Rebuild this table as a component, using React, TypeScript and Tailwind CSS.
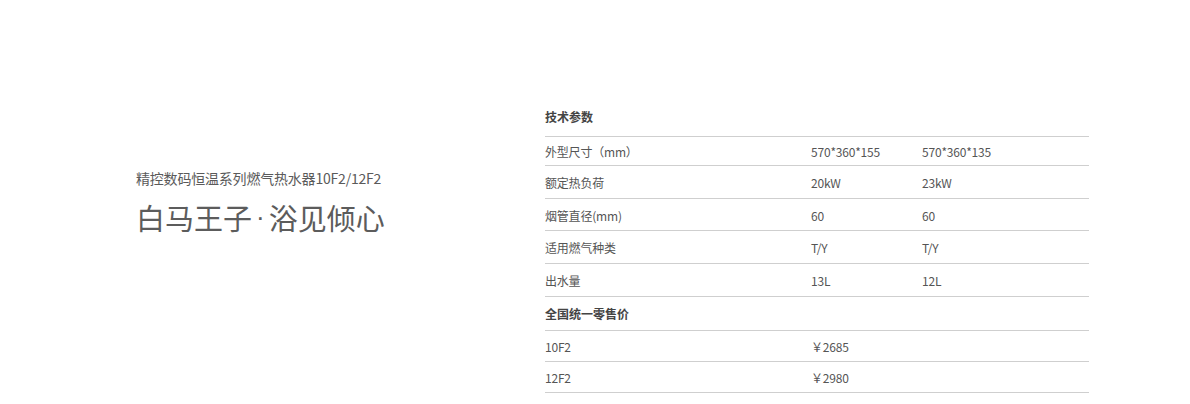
import React from 'react';

const font = { fontFamily: '"Noto Sans CJK SC", "Noto Sans", sans-serif' };

type Row = { cells: string[]; h: string; bold?: boolean };

const rows: Row[] = [
  { cells: ['技术参数'], h: 'h-[35px]', bold: true },
  { cells: ['外型尺寸（mm）', '570*360*155', '570*360*135'], h: 'h-[29px]' },
  { cells: ['额定热负荷', '20kW', '23kW'], h: 'h-[33px]' },
  { cells: ['烟管直径(mm)', '60', '60'], h: 'h-[32px]' },
  { cells: ['适用燃气种类', 'T/Y', 'T/Y'], h: 'h-[33px]' },
  { cells: ['出水量', '13L', '12L'], h: 'h-[33px]' },
  { cells: ['全国统一零售价'], h: 'h-[34px]', bold: true },
  { cells: ['10F2', '￥2685'], h: 'h-[31px]' },
  { cells: ['12F2', '￥2980'], h: 'h-[31px]' },
];

const colWidths = ['w-[266px]', 'w-[111px]', 'w-[167px]'];

export default function App() {
  return (
    <div className="w-[1190px] h-[404px] bg-white flex pt-[102px] text-[#555]" style={font}>
      {/* left intro */}
      <div className="w-[545px] shrink-0 pl-[136px] pt-[66px]">
        <div className="text-[14px] leading-[20px] text-[#5a5a5a] whitespace-nowrap tracking-[-0.2px]">精控数码恒温系列燃气热水器10F2/12F2</div>
        <div className="mt-[9px] text-[29px] leading-[40px] text-[#5c5c5c] whitespace-nowrap flex items-center">
          <span>白马王子</span>
          <span className="mx-[4px] text-[26px]" style={{ fontFamily: '"Liberation Sans", sans-serif' }}>·</span>
          <span>浴见倾心</span>
        </div>
      </div>

      {/* spec table */}
      <div className="w-[544px] shrink-0">
        {rows.map((r, i) => (
          <div
            key={i}
            className={`${r.h} flex border-b border-[#cfcfcf] text-[12px] ${
              r.bold
                ? `items-center font-bold text-[#444] ${i === 0 ? 'pb-[4px]' : 'pt-[1px]'}`
                : 'items-center pt-[2px] text-[#555] tracking-[-0.2px]'
            }`}
          >
            {r.cells.map((c, j) => (
              <div key={j} className={`${colWidths[j]} whitespace-nowrap`}>
                {c}
              </div>
            ))}
          </div>
        ))}
      </div>
    </div>
  );
}
